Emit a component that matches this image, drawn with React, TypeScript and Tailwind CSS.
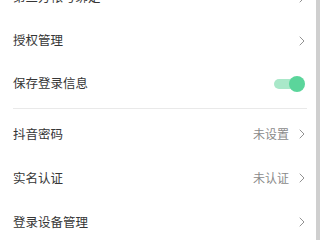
import { useState } from 'react';

interface Row {
  label: string;
  value?: string;
  toggle?: boolean;
}

const topRows: Row[] = [
  { label: '第三方帐号绑定' },
  { label: '授权管理' },
  { label: '保存登录信息', toggle: true },
];

const bottomRows: Row[] = [
  { label: '抖音密码', value: '未设置' },
  { label: '实名认证', value: '未认证' },
  { label: '登录设备管理' },
];

function Chevron() {
  return (
    <svg width="6" height="10" viewBox="0 0 6 10" className="shrink-0">
      <path d="M1 1l4 4-4 4" fill="none" stroke="#929292" strokeWidth="1" strokeLinecap="round" strokeLinejoin="round" />
    </svg>
  );
}

function Toggle({ on }: { on: boolean }) {
  return (
    <div className="relative w-[31px] h-[16px] flex items-center">
      <div className={`w-[26px] h-[10px] rounded-full ${on ? 'bg-[#a9e8c9]' : 'bg-[#dddddd]'}`} />
      <div
        className={`absolute top-0 w-[16px] h-[16px] rounded-full ${on ? 'right-0 bg-[#5bd59b]' : 'left-0 bg-white'}`}
      />
    </div>
  );
}

function SettingRow({ row, height }: { row: Row; height: string }) {
  const [on, setOn] = useState(true);
  return (
    <div className={`flex items-center justify-between pl-[13px] pr-[11px] ${height}`}>
      <span className="text-[12.5px] text-[#363636]">{row.label}</span>
      {row.toggle ? (
        <button onClick={() => setOn(!on)}>
          <Toggle on={on} />
        </button>
      ) : (
        <div className="flex items-center gap-[10px]">
          {row.value && <span className="text-[12px] text-[#8a8a8a]">{row.value}</span>}
          <Chevron />
        </div>
      )}
    </div>
  );
}

export default function App() {
  return (
    <div
      className="flex w-[320px] h-[240px] overflow-hidden bg-white"
      style={{ fontFamily: '"Noto Sans CJK SC", "Noto Sans", sans-serif' }}
    >
      <div className="flex-1 min-w-0 flex flex-col">
        <div className="-mt-[24px]">
          {topRows.map((r) => (
            <SettingRow key={r.label} row={r} height="h-[43px]" />
          ))}
        </div>
        <div className="mt-[3px] mb-[3px] ml-[13px] mr-[9px] h-px shrink-0 bg-[#e9e9e9]" />
        <div>
          {bottomRows.map((r) => (
            <SettingRow key={r.label} row={r} height="h-[44px]" />
          ))}
        </div>
      </div>
      <div className="w-[4px] shrink-0 bg-[#cfcfcf]" />
    </div>
  );
}
